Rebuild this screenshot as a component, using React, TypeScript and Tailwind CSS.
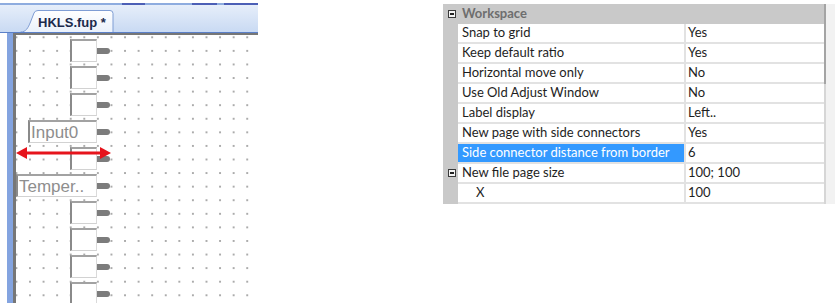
import React from "react";

const blocks: { label?: string; w: number }[] = [
  { w: 27 },
  { w: 27 },
  { w: 27 },
  { label: "Input0", w: 69 },
  { w: 27 },
  { label: "Temper..", w: 81 },
  { w: 27 },
  { w: 27 },
  { w: 27 },
  { w: 27 },
];

const props: { name: string; value: string; selected?: boolean; group?: boolean; indent?: boolean }[] = [
  { name: "Snap to grid", value: "Yes" },
  { name: "Keep default ratio", value: "Yes" },
  { name: "Horizontal move only", value: "No" },
  { name: "Use Old Adjust Window", value: "No" },
  { name: "Label display", value: "Left.." },
  { name: "New page with side connectors", value: "Yes" },
  { name: "Side connector distance from border", value: "6", selected: true },
  { name: "New file page size", value: "100; 100", group: true },
  { name: "X", value: "100", indent: true },
];

function MinusBox() {
  return (
    <div className="flex h-[8px] w-[8px] items-center justify-center border border-[#3a3a3a] bg-[#f4f4f4]">
      <div className="h-[1.5px] w-[4px] bg-[#222]" />
    </div>
  );
}

function Block({ label, w }: { label?: string; w: number }) {
  return (
    <div className="flex h-[27px] items-start">
      <div className="flex w-[81px] justify-end">
        <div
          style={{ width: w }}
          className="flex h-[23px] items-center overflow-hidden border-t-2 border-l-2 border-r border-b border-t-[#a2a2a2] border-l-[#8a8a8a] border-r-[#dadada] border-b-[#d2d2d2] bg-white pl-[1px] font-['Liberation_Sans',Arial,sans-serif] text-[17px] leading-none text-[#8e8e8e]"
        >
          {label}
        </div>
      </div>
      <div className="mt-[9px] h-[6px] w-[13px] rounded-r-full bg-[#7c7c7c]" />
    </div>
  );
}

function Editor() {
  return (
    <div className="flex h-[303px] w-[258px] shrink-0 flex-col bg-white">
      <div className="relative flex h-[32px] shrink-0 items-end bg-[linear-gradient(to_bottom,#ffffff_0px,#ffffff_3px,#e6eefa_5px,#c9daf3_100%)] pl-[20px]">
        <div className="absolute top-[3px] left-0 right-0 flex h-[2px] bg-[#8eacdf]">
          <div className="ml-[122px] w-[23px] bg-[#4c5fb6]" />
          <div className="ml-[47px] w-[25px] bg-[#4c5fb6]" />
          <div className="ml-[7px] w-[34px] bg-[#4c5fb6]" />
        </div>
        <div className="relative h-[22px] w-[94px]">
          <svg className="absolute inset-0" width="94" height="22" viewBox="0 0 94 22">
            <defs>
              <linearGradient id="tabg" x1="0" y1="0" x2="0" y2="1">
                <stop offset="0" stopColor="#ffffff" />
                <stop offset="1" stopColor="#eaf1fb" />
              </linearGradient>
            </defs>
            <path
              d="M0.5 22 C6 22 8 18 10.5 12 L14 3 Q15 0.5 18 0.5 L90 0.5 Q93 0.5 93 3.5 L93 22"
              fill="url(#tabg)"
              stroke="#7f9dd4"
              strokeWidth="1"
            />
          </svg>
          <span className="relative block pt-[3px] pl-[18px] font-['Liberation_Sans',Arial,sans-serif] text-[13px] font-bold text-[#1c2a4c]">
            HKLS.fup *
          </span>
        </div>
      </div>
      <div className="h-[1px] shrink-0 bg-[#5b80c8]" />
      <div className="flex min-h-0 flex-1">
        <div className="w-[7px] bg-white" />
        <div className="w-[6px] bg-[#84a4e0]" />
        <div className="relative flex-1 overflow-hidden border-t-2 border-l-[3px] border-[#777]">
          <div className="h-full bg-white bg-[radial-gradient(circle,#ababab_0.8px,transparent_1.3px)] bg-[length:13.58px_13.58px] bg-[position:-6.4px_-4.5px] pt-[4px]">
            {blocks.map((b, i) => (
              <Block key={i} label={b.label} w={b.w} />
            ))}
          </div>
          <svg className="absolute top-[111px] left-0" width="96" height="14" viewBox="0 0 96 14">
            <line x1="8" y1="7" x2="86" y2="7" stroke="#e6141c" strokeWidth="3" />
            <polygon points="0,7 11,1 11,13" fill="#e6141c" />
            <polygon points="95,7 84,1 84,13" fill="#e6141c" />
          </svg>
        </div>
      </div>
    </div>
  );
}

function PropertyGrid() {
  return (
    <div className="flex w-[392px] pt-[4px] font-['Lato','Open_Sans',sans-serif] text-[13px]">
      <div className="w-[381px]">
        <div className="flex h-[20px] items-center bg-[#c9c9c9]">
          <div className="flex w-[15px] justify-center pl-[2px]">
            <MinusBox />
          </div>
          <span className="pl-[4px] font-bold text-[#6e6e6e]">Workspace</span>
        </div>
        {props.map((p) => (
          <div key={p.name} className="flex h-[20px]">
            <div className="flex w-[15px] items-center justify-center bg-[#c9c9c9] pl-[2px] pb-[2px]">
              {p.group && <MinusBox />}
            </div>
            <div className="flex flex-1 flex-col">
              <div className="flex h-[18px]">
                <div
                  className={`flex w-[226px] items-center ${p.indent ? "pl-[18px]" : "pl-[4px]"} ${
                    p.selected ? "bg-[#3399ff] text-white" : "text-[#1e1e1e]"
                  }`}
                >
                  {p.name}
                </div>
                <div className="w-[2px] bg-[#e2e2e2]" />
                <div className="flex flex-1 items-center pl-[2px] text-[#1e1e1e]">{p.value}</div>
              </div>
              <div className="h-[2px] bg-[#e2e2e2]" />
            </div>
          </div>
        ))}
      </div>
      <div className="flex w-[11px] flex-col">
        <div className="h-[80px] border-l-2 border-[#a4a4a4] bg-[#f2f2f2]" />
        <div className="h-[120px] border-l-2 border-[#d6d6d6] bg-[#f2f2f2]" />
      </div>
    </div>
  );
}

export default function App() {
  return (
    <div className="flex h-[303px] w-[835px] justify-between overflow-hidden bg-white">
      <Editor />
      <PropertyGrid />
    </div>
  );
}
